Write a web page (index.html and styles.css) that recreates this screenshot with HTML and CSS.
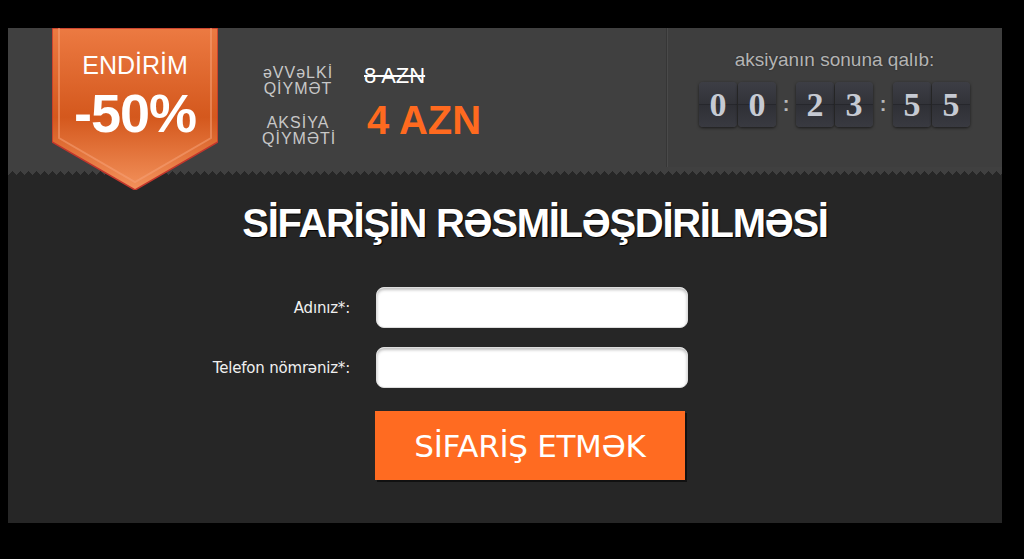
FILE: index.html
```html
<!DOCTYPE html>
<html lang="az">
<head>
    <meta charset="UTF-8">
    <meta name="viewport" content="width=device-width, initial-scale=1.0">
    <title>Sifariş</title>
    <link rel="stylesheet" href="styles.css">
</head>
<body>
    <div class="panel">
        <div class="top">
            <div class="ribbon">
                <svg class="ribbon-bg" width="166" height="162" viewBox="0 0 166 162">
                    <defs>
                        <linearGradient id="rib" x1="0" y1="0" x2="0" y2="1">
                            <stop offset="0" stop-color="#ec7a42"/>
                            <stop offset="0.55" stop-color="#d4581d"/>
                            <stop offset="1" stop-color="#f3925c"/>
                        </linearGradient>
                    </defs>
                    <polygon points="0,0 166,0 166,114 83,162 0,114" fill="url(#rib)" stroke="#c2362c" stroke-width="1.5"/>
                    <polyline points="7,0 7,110 83,154 159,110 159,0" fill="none" stroke="#f6a176" stroke-opacity="0.55" stroke-width="2"/>
                </svg>
                <div class="ribbon-label">ENDİRİM</div>
                <div class="ribbon-value">-50%</div>
            </div>

            <div class="prices">
                <div class="price-label">əVVəLKİ<br>QİYMƏT</div>
                <div class="price-old">8 AZN</div>
                <div class="price-label">AKSİYA<br>QİYMƏTİ</div>
                <div class="price-new">4 AZN</div>
            </div>

            <div class="timer">
                <div class="timer-title">aksiyanın sonuna qalıb:</div>
                <div class="clock">
                    <div class="pair"><span class="digit">0</span><span class="digit">0</span></div>
                    <span class="sep">:</span>
                    <div class="pair"><span class="digit">2</span><span class="digit">3</span></div>
                    <span class="sep">:</span>
                    <div class="pair"><span class="digit">5</span><span class="digit">5</span></div>
                </div>
            </div>
        </div>
        <div class="zigzag"></div>

        <div class="order">
            <h2 class="order-title">SİFARİŞİN RƏSMİLƏŞDİRİLMƏSİ</h2>
            <form class="order-form">
                <div class="form-row">
                    <label class="form-label" for="name">Adınız*:</label>
                    <input class="form-input" id="name" type="text">
                </div>
                <div class="form-row">
                    <label class="form-label" for="phone">Telefon nömrəniz*:</label>
                    <input class="form-input" id="phone" type="text">
                </div>
                <div class="form-row">
                    <button class="order-btn" type="button">SİFARİŞ ETMƏK</button>
                </div>
            </form>
        </div>
    </div>
</body>
</html>
```

FILE: styles.css
```css
body {
    margin: 0;
    background-color: #000;
    font-family: "Liberation Sans", Arial, sans-serif;
}

.panel {
    margin: 28px 0 0 8px;
    width: 994px;
    height: 495px;
    background-color: #262626;
}

/* top bar */

.top {
    display: flex;
    align-items: flex-start;
    height: 139px;
    background-color: #404040;
}

.zigzag {
    height: 8px;
    background-color: #262626;
    background-image:
        linear-gradient(135deg, #404040 50%, transparent 50%),
        linear-gradient(225deg, #404040 50%, transparent 50%);
    background-size: 8px 8px;
}

.ribbon {
    position: relative;
    z-index: 2;
    flex-shrink: 0;
    width: 166px;
    height: 162px;
    margin-left: 44px;
    text-align: center;
    color: #fff;
}

.ribbon-bg {
    position: absolute;
    left: 0;
    top: 0;
}

.ribbon-label {
    position: relative;
    padding-top: 22px;
    font-size: 25px;
    line-height: 30px;
}

.ribbon-value {
    position: relative;
    margin-top: 6px;
    font-size: 54px;
    line-height: 54px;
    font-weight: bold;
    letter-spacing: -1px;
}

.prices {
    display: grid;
    grid-template-columns: 72px auto;
    column-gap: 30px;
    row-gap: 18px;
    margin-left: 44px;
    padding-top: 37px;
}

.price-label {
    font-size: 16px;
    line-height: 16px;
    letter-spacing: 1px;
    color: #c8c8c8;
    text-align: center;
}

.price-old {
    margin-top: -1px;
    font-size: 22px;
    line-height: 24px;
    color: #fff;
    text-decoration: line-through;
}

.price-new {
    margin: -15px 0 0 3px;
    font-size: 40px;
    line-height: 40px;
    font-weight: bold;
    color: #ff6a1f;
}

.timer {
    align-self: stretch;
    margin-left: auto;
    width: 335px;
    padding-top: 21px;
    border-left: 1px solid #363636;
    box-shadow: inset 1px 0 0 #4a4a4a;
    background-color: #3e3e3e;
    text-align: center;
}

.timer-title {
    font-size: 19px;
    line-height: 22px;
    color: #b4b4b4;
    text-shadow: 0 0 2px rgba(0, 0, 0, 0.4);
}

.clock {
    display: flex;
    justify-content: center;
    margin-top: 11px;
}

.pair {
    display: flex;
    gap: 1px;
}

.digit {
    width: 38px;
    height: 45px;
    border-radius: 4px;
    background: linear-gradient(#3d3e45 0%, #323339 48%, #26272c 50%, #2f3036 52%, #393a41 100%);
    box-shadow: 0 1px 3px rgba(0, 0, 0, 0.6);
    font-family: "Liberation Serif", "Times New Roman", serif;
    font-weight: bold;
    font-size: 34px;
    line-height: 46px;
    color: #c6cad3;
}

.sep {
    width: 20px;
    font-size: 20px;
    line-height: 45px;
    font-weight: bold;
    color: #b8b8b8;
}

/* order form */

.order-title {
    margin: 25px 0 0;
    padding-left: 60px;
    font-size: 40px;
    line-height: 46px;
    letter-spacing: -1.3px;
    color: #fff;
    text-align: center;
    text-shadow: 1px 1px 1px #000;
}

.order-form {
    margin-top: 41px;
}

.form-row {
    display: flex;
    align-items: center;
    margin-bottom: 19px;
}

.form-label {
    width: 342px;
    margin-right: 26px;
    text-align: right;
    font-family: "DejaVu Sans", Verdana, sans-serif;
    font-size: 15px;
    letter-spacing: -0.2px;
    color: #f0f0f0;
}

.form-input {
    box-sizing: border-box;
    width: 312px;
    height: 41px;
    border: 1px solid #ddd;
    border-radius: 8px;
    background-color: #fff;
    box-shadow: inset 0 2px 3px rgba(0, 0, 0, 0.25);
}

.order-btn {
    width: 310px;
    height: 69px;
    margin: 4px 0 0 367px;
    border: none;
    background-color: #ff6b21;
    box-shadow: 2px 2px 0 #111;
    font-family: "DejaVu Sans", Verdana, sans-serif;
    font-size: 31px;
    letter-spacing: -0.3px;
    color: #fff;
    cursor: pointer;
}
```
